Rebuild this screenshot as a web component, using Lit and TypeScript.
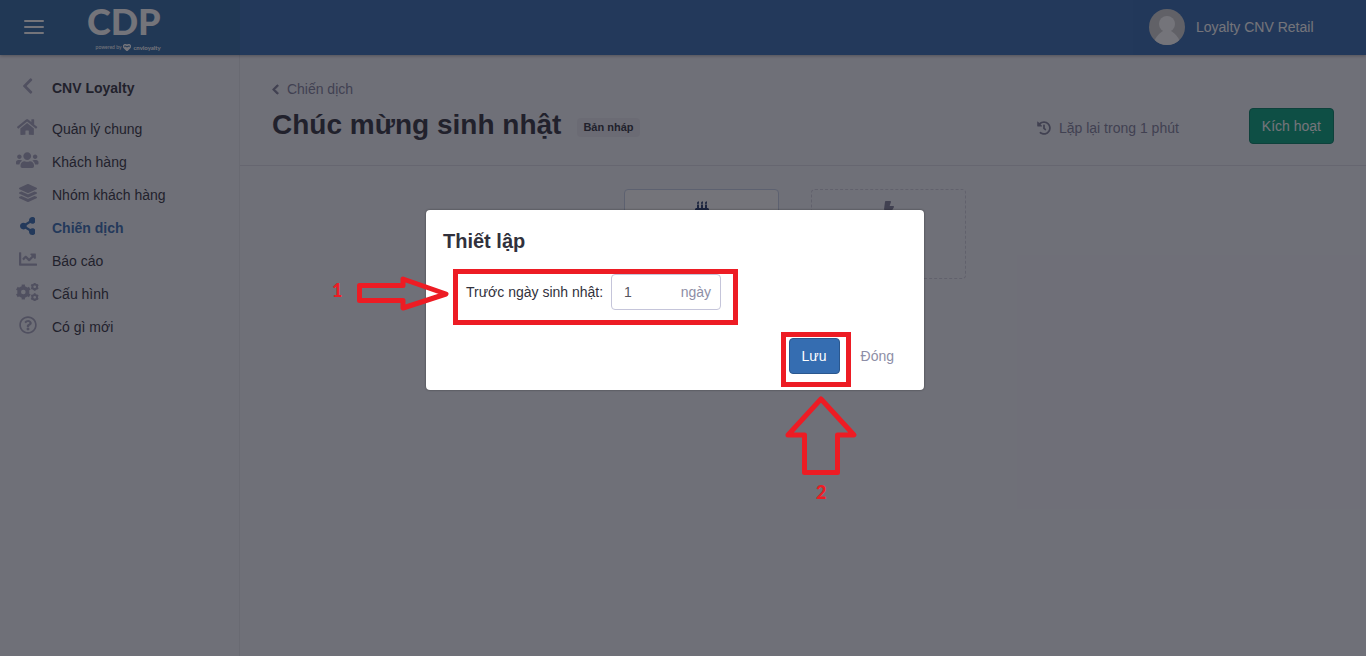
import { LitElement, html, svg, css } from "lit";
import { customElement, state } from "lit/decorators.js";

const chevron = svg`<path d="M34.5 239L228.9 44.7c9.4-9.4 24.6-9.4 33.9 0l22.7 22.7c9.4 9.4 9.4 24.5 0 33.9L131.5 256l154 154.8c9.3 9.4 9.3 24.5 0 33.9l-22.7 22.7c-9.4 9.4-24.6 9.4-33.9 0L34.5 273c-9.4-9.4-9.4-24.6 0-34z"/>`;

const gear = (x: number, y: number, r: number, hole: number) => svg`
  <g transform="translate(${x} ${y})" fill="none" stroke="currentColor">
    <circle r=${(r * 0.82 + hole) / 2} stroke-width=${r * 0.82 - hole}></circle>
    ${[0, 60, 120, 180, 240, 300].map(
      (a) => svg`<path transform="rotate(${a})" stroke-width=${r * 0.44} d="M0 ${-r * 0.62}V${-r}"/>`
    )}
  </g>`;

const icons = {
  home: { w: 576, d: svg`<path d="M280.37 148.26L96 300.11V464a16 16 0 0 0 16 16l112.06-.29a16 16 0 0 0 15.92-16V368a16 16 0 0 1 16-16h64a16 16 0 0 1 16 16v95.64a16 16 0 0 0 16 16.05L464 480a16 16 0 0 0 16-16V300L295.67 148.26a12.19 12.19 0 0 0-15.3 0zM571.6 251.47L488 182.56V44.05a12 12 0 0 0-12-12h-56a12 12 0 0 0-12 12v72.61L318.47 43a48 48 0 0 0-61 0L4.34 251.47a12 12 0 0 0-1.6 16.9l25.5 31A12 12 0 0 0 45.15 301l235.22-193.74a12.19 12.19 0 0 1 15.3 0L530.9 301a12 12 0 0 0 16.9-1.6l25.5-31a12 12 0 0 0-1.7-16.93z"/>` },
  users: { w: 640, d: svg`<path d="M96 224c35.3 0 64-28.7 64-64s-28.7-64-64-64-64 28.7-64 64 28.7 64 64 64zm448 0c35.3 0 64-28.7 64-64s-28.7-64-64-64-64 28.7-64 64 28.7 64 64 64zm32 32h-64c-17.6 0-33.5 7.1-45.1 18.6 40.3 22.1 68.9 62 75.1 109.4h66c17.7 0 32-14.3 32-32v-32c0-35.3-28.7-64-64-64zm-256 0c61.9 0 112-50.1 112-112S381.9 32 320 32 208 82.1 208 144s50.1 112 112 112zm76.8 32h-8.3c-20.8 10-43.9 16-68.5 16s-47.6-6-68.5-16h-8.3C179.6 288 128 339.6 128 403.2V432c0 26.5 21.5 48 48 48h288c26.5 0 48-21.5 48-48v-28.8c0-63.6-51.6-115.2-115.2-115.2zm-223.7-13.4C161.5 263.1 145.6 256 128 256H64c-35.3 0-64 28.7-64 64v32c0 17.7 14.3 32 32 32h65.9c6.3-47.4 34.9-87.3 75.2-109.4z"/>` },
  layers: { w: 512, d: svg`<path d="M12.41 148.02l232.94 105.67c6.8 3.09 14.49 3.09 21.29 0l232.94-105.67c16.55-7.51 16.55-32.52 0-40.03L266.65 2.31a25.607 25.607 0 0 0-21.29 0L12.41 107.98c-16.55 7.51-16.55 32.53 0 40.04zm487.18 88.28l-58.09-26.33-161.64 73.27c-7.56 3.43-15.59 5.17-23.86 5.17s-16.29-1.74-23.86-5.17L70.51 209.97l-58.1 26.33c-16.55 7.5-16.55 32.5 0 40l232.94 105.59c6.8 3.08 14.49 3.08 21.29 0L499.59 276.3c16.55-7.5 16.55-32.5 0-40zm0 127.8l-57.87-26.23-161.86 73.37c-7.56 3.43-15.59 5.17-23.86 5.17s-16.29-1.74-23.86-5.17L70.29 337.87 12.41 364.1c-16.55 7.5-16.55 32.5 0 40l232.94 105.59c6.8 3.08 14.49 3.08 21.29 0L499.59 404.1c16.55-7.5 16.55-32.5 0-40z"/>` },
  share: { w: 448, d: svg`<path d="M352 320c-22.608 0-43.387 7.819-59.79 20.895l-102.486-64.054a96.551 96.551 0 0 0 0-41.683l102.486-64.054C308.613 184.181 329.392 192 352 192c53.019 0 96-42.981 96-96S405.019 0 352 0s-96 42.981-96 96c0 7.158.79 14.13 2.276 20.841L155.79 180.895C139.387 167.819 118.608 160 96 160c-53.019 0-96 42.981-96 96s42.981 96 96 96c22.608 0 43.387-7.819 59.79-20.895l102.486 64.054A96.301 96.301 0 0 0 256 416c0 53.019 42.981 96 96 96s96-42.981 96-96-42.981-96-96-96z"/>` },
  chart: { w: 512, d: svg`<path d="M496 384H64V80c0-8.84-7.16-16-16-16H16C7.16 64 0 71.16 0 80v336c0 17.67 14.33 32 32 32h464c8.84 0 16-7.16 16-16v-32c0-8.84-7.16-16-16-16zM464 96H345.94c-21.38 0-32.09 25.85-16.97 40.97l32.4 32.4L288 242.75l-73.37-73.37c-12.5-12.5-32.76-12.5-45.25 0l-68.69 68.69c-6.25 6.25-6.25 16.38 0 22.63l22.62 22.62c6.25 6.25 16.38 6.25 22.63 0L192 237.25l73.37 73.37c12.5 12.5 32.76 12.5 45.25 0l96-96 32.4 32.4c15.12 15.12 40.97 4.41 40.97-16.97V112c.01-8.84-7.15-16-15.99-16z"/>` },
  cogs: { w: 640, d: svg`${gear(208, 256, 212, 66)}${gear(532, 106, 116, 38)}${gear(532, 406, 116, 38)}` },
  help: { w: 512, d: svg`<path d="M256 8C119.043 8 8 119.083 8 256c0 136.997 111.043 248 248 248s248-111.003 248-248C504 119.083 392.957 8 256 8zm0 448c-110.532 0-200-89.431-200-200 0-110.495 89.472-200 200-200 110.491 0 200 89.471 200 200 0 110.53-89.431 200-200 200zm107.244-255.2c0 67.052-72.421 68.084-72.421 92.863V300c0 6.627-5.373 12-12 12h-45.647c-6.627 0-12-5.373-12-12v-8.659c0-35.745 27.1-50.034 47.579-61.516 17.561-9.845 28.324-16.541 28.324-29.579 0-17.246-21.999-28.693-39.784-28.693-23.189 0-33.894 10.977-48.942 29.969-4.057 5.12-11.46 6.071-16.666 2.124l-27.824-21.098c-5.107-3.872-6.251-11.066-2.644-16.363C184.846 131.491 214.94 112 261.794 112c49.071 0 101.45 38.304 101.45 88.8zM298 368c0 23.159-18.841 42-42 42s-42-18.841-42-42 18.841-42 42-42 42 18.841 42 42z"/>` },
  history: { w: 512, d: svg`<path d="M504 255.531c.253 136.64-111.18 248.372-247.82 248.468-59.015.042-113.223-20.53-155.822-54.911-11.077-8.94-11.905-25.541-1.839-35.607l11.267-11.267c8.609-8.609 22.353-9.551 31.891-1.984C173.062 425.135 212.781 440 256 440c101.705 0 184-82.311 184-184 0-101.705-82.311-184-184-184-48.814 0-93.149 18.969-126.068 49.932l50.754 50.754c10.08 10.08 2.941 27.314-11.313 27.314H24c-8.837 0-16-7.163-16-16V38.627c0-14.254 17.234-21.393 27.314-11.314l49.372 49.372C129.209 34.136 189.552 8 256 8c136.81 0 247.747 110.78 248 247.531zm-180.912 78.784l9.823-12.63c8.138-10.463 6.253-25.542-4.21-33.679L288 256.349V152c0-13.255-10.745-24-24-24h-16c-13.255 0-24 10.745-24 24v135.651l65.409 50.874c10.463 8.137 25.541 6.253 33.679-4.21z"/>` },
  bolt: { w: 320, d: svg`<path d="M296 160H180.6l42.6-129.8C227.2 15 215.7 0 200 0H56C44 0 33.8 8.9 32.2 20.8l-32 240C-1.7 275.2 9.5 288 24 288h118.7L96.6 482.5c-3.6 15.2 8 29.5 23.3 29.5 8.4 0 16.4-4.4 20.8-12l176-304c9.3-15.9-2.2-36-20.7-36z"/>` },
  cake: { w: 448, d: svg`<path d="M96 96c-18 0-32-14-32-32C64 32 96 40 96 0c12 0 32 29 32 56s-14 40-32 40zm128 0c-18 0-32-14-32-32 0-32 32-24 32-64 12 0 32 29 32 56s-14 40-32 40zm128 0c-18 0-32-14-32-32 0-32 32-24 32-64 12 0 32 29 32 56s-14 40-32 40zM64 112h64v112h64V112h64v112h64V112h64v112h16c26 0 48 22 48 48v64c-40 0-40-32-75-32-36 0-39 32-75 32-35 0-37-32-74-32-36 0-38 32-74 32-37 0-38-32-75-32-35 0-35 32-75 32v-64c0-26 22-48 48-48h16zM0 368c40 0 40-32 75-32 36 0 38 32 75 32 36 0 38-32 74-32 37 0 38 32 74 32 36 0 39-32 75-32 35 0 35 32 75 32v144H0z"/>` },
  chevron: { w: 320, d: chevron },
};

type IconName = keyof typeof icons;

const icon = (name: IconName) =>
  html`<svg class="icon" viewBox="0 0 ${icons[name].w} 512" aria-hidden="true">${icons[name].d}</svg>`;

const menu: { icon: IconName; label: string; active?: boolean }[] = [
  { icon: "home", label: "Quản lý chung" },
  { icon: "users", label: "Khách hàng" },
  { icon: "layers", label: "Nhóm khách hàng" },
  { icon: "share", label: "Chiến dịch", active: true },
  { icon: "chart", label: "Báo cáo" },
  { icon: "cogs", label: "Cấu hình" },
  { icon: "help", label: "Có gì mới" },
];

@customElement("app-root")
export class AppRoot extends LitElement {
  @state() private days = "1";

  static styles = css`
    :host {
      display: block;
      font: 14px/20px "Liberation Sans", Arial, sans-serif;
      color: #31313c;
      background: #fff;
    }
    * { box-sizing: border-box; }
    a { color: inherit; text-decoration: none; }
    h1, h2, p { margin: 0; }
    button, input { font: inherit; }
    .icon { display: block; height: 1em; fill: currentColor; flex: none; }

    .app {
      position: relative;
      display: flex;
      flex-direction: column;
      min-height: calc(100vh - 6px);
      background: #f3f4fa;
    }

    .topbar {
      display: flex;
      align-items: stretch;
      height: 55px;
      background: #356db1;
      color: #fff;
      box-shadow: 0 1px 3px rgba(0, 0, 0, 0.3);
      z-index: 1;
    }
    .brand {
      display: flex;
      align-items: center;
      width: 240px;
      padding: 0 0 1px 24px;
      gap: 43px;
      background: #3069a4;
    }
    .burger {
      display: grid;
      gap: 4px;
      width: 20px;
      padding: 0;
      border: 0;
      background: none;
    }
    .burger i { height: 2px; border-radius: 1px; background: #fff; }
    .logo {
      display: grid;
      justify-items: end;
      margin-bottom: 2px;
      font-family: Lato, sans-serif;
    }
    .logo-name { font-size: 36px; line-height: 43px; font-weight: 900; }
    .logo-tag {
      display: flex;
      align-items: center;
      gap: 2px;
      font-size: 5px;
      line-height: 9px;
    }
    .logo-tag b { font-size: 6px; }
    .logo-tag svg { width: 8px; height: 7px; fill: none; stroke: currentColor; stroke-width: 3; }
    .account {
      display: flex;
      align-items: center;
      gap: 11px;
      width: 233px;
      margin-left: auto;
      padding: 0 0 1px 16px;
      background: #346aae;
    }
    .avatar { width: 36px; height: 36px; border-radius: 50%; }

    .body { display: flex; flex: 1; }
    .sidebar {
      flex: none;
      width: 240px;
      padding: 17px 0;
      border-right: 1px solid #e4e5ec;
    }
    .row {
      display: grid;
      grid-template-columns: 24px 1fr;
      align-items: center;
      column-gap: 12px;
      height: 32px;
      padding-left: 16px;
    }
    .row .icon { justify-self: center; margin: 0 1px 4px 0; font-size: 18px; color: #a6a6bd; }
    .section { margin-bottom: 9px; font-weight: 700; }
    .menu { display: grid; gap: 1px; }
    .row.active, .row.active .icon { color: #356db1; }
    .active { font-weight: 700; }

    .main { flex: 1; min-width: 0; }
    .head { padding: 24px 32px 21px; border-bottom: 1px solid #dcdde7; }
    .crumb {
      display: inline-flex;
      align-items: center;
      gap: 8px;
      margin-bottom: 5px;
      color: #80809a;
      vertical-align: top;
    }
    .crumb .icon { font-size: 11px; stroke: currentColor; stroke-width: 40; }
    .title-row { display: flex; align-items: flex-end; height: 40px; }
    .title { font-size: 28px; line-height: 38px; }
    .badge {
      margin: 0 auto 7px 16px;
      padding: 0 6px;
      border-radius: 4px;
      background: #e8e9f0;
      font-size: 11px;
      line-height: 19px;
      font-weight: 700;
    }
    .repeat {
      display: flex;
      align-items: center;
      gap: 8px;
      margin-right: 70px;
      line-height: 32px;
      color: #80809a;
    }
    .btn {
      height: 36px;
      padding: 0 12px;
      border: 1px solid transparent;
      border-radius: 4px;
      background: none;
      color: #8e8ea6;
    }
    .activate { background: #00a27a; border-color: #007f62; color: #fff; }
    .save { background: #356db1; border-color: #2a578e; color: #fff; }

    .flow { display: flex; justify-content: center; gap: 32px; padding: 23px 16px 0 0; }
    .node {
      display: flex;
      justify-content: center;
      width: 155px;
      height: 90px;
      padding-top: 11px;
      border: 1px solid #c5d0e6;
      border-radius: 4px;
      background: #fff;
      color: #233a6c;
      font-size: 16px;
    }
    .empty { border: 1px dashed #cfd0dc; background: none; color: #80809a; }

    .overlay {
      position: absolute;
      inset: 0;
      z-index: 2;
      display: flex;
      justify-content: center;
      align-items: flex-start;
      padding: 210px 16px 0 0;
      background: rgba(23, 23, 33, 0.6);
    }
    .modal {
      position: relative;
      width: 498px;
      padding: 17px 17px 16px;
      border-radius: 4px;
      background: #fff;
      box-shadow: 0 0 2px rgba(0, 0, 0, 0.5);
    }
    .modal-title { font-size: 20px; line-height: 28px; }
    .field {
      display: flex;
      align-items: center;
      gap: 8px;
      margin: 19px 0 28px;
      padding-left: 23px;
    }
    .control {
      display: flex;
      align-items: center;
      width: 110px;
      height: 36px;
      padding: 0 9px 0 12px;
      border: 1px solid #c5c5da;
      border-radius: 4px;
      color: #8e8ea6;
    }
    .control input {
      flex: 1;
      min-width: 0;
      padding: 0;
      border: 0;
      outline: 0;
      background: none;
      color: #55555f;
    }
    .actions { display: flex; justify-content: flex-end; gap: 8px; }

    .marks {
      position: absolute;
      left: -100px;
      top: 0;
      width: 598px;
      height: 300px;
      pointer-events: none;
      fill: none;
      stroke: #ed1c24;
      stroke-width: 5;
    }
    .marks text { font: 900 18px Lato, sans-serif; fill: #ed1c24; stroke: none; }
  `;

  render() {
    return html`
      <div class="app">
        <header class="topbar">
          <div class="brand">
            <button class="burger" aria-label="Menu"><i></i><i></i><i></i></button>
            <a class="logo" href="#">
              <span class="logo-name">CDP</span>
              <span class="logo-tag">
                powered by
                <svg viewBox="0 0 16 14"><path d="M8 13L2 7C-1 3 4-1 8 3c4-4 9 0 6 4zM4 6l4 3 4-3"/></svg>
                <b>cnvloyalty</b>
              </span>
            </a>
          </div>
          <div class="account">
            <svg class="avatar" viewBox="0 0 36 36" aria-hidden="true">
              <rect width="36" height="36" fill="#d0d0d0"></rect>
              <circle cx="18" cy="15" r="8" fill="#fff"></circle>
              <path d="M5 33c2-6 6-9 9-11h8c3 2 7 5 9 11v3H5z" fill="#fff"></path>
            </svg>
            <span>Loyalty CNV Retail</span>
          </div>
        </header>

        <div class="body">
          <nav class="sidebar">
            <a class="row section" href="#">${icon("chevron")}<span>CNV Loyalty</span></a>
            <div class="menu">
              ${menu.map(
                (m) => html`<a class="row ${m.active ? "active" : ""}" href="#">${icon(m.icon)}<span>${m.label}</span></a>`
              )}
            </div>
          </nav>

          <main class="main">
            <div class="head">
              <a class="crumb" href="#">${icon("chevron")}<span>Chiến dịch</span></a>
              <div class="title-row">
                <h1 class="title">Chúc mừng sinh nhật</h1>
                <span class="badge">Bản nháp</span>
                <span class="repeat">${icon("history")}Lặp lại trong 1 phút</span>
                <button class="btn activate">Kích hoạt</button>
              </div>
            </div>
            <div class="flow">
              <div class="node">${icon("cake")}</div>
              <div class="node empty">${icon("bolt")}</div>
            </div>
          </main>
        </div>

        <div class="overlay">
          <section class="modal" role="dialog" aria-labelledby="dialog-title">
            <h2 class="modal-title" id="dialog-title">Thiết lập</h2>
            <div class="field">
              <label for="days">Trước ngày sinh nhật:</label>
              <div class="control">
                <input
                  id="days"
                  inputmode="numeric"
                  .value=${this.days}
                  @input=${(e: Event) => (this.days = (e.target as HTMLInputElement).value)}
                />
                <span>ngày</span>
              </div>
            </div>
            <div class="actions">
              <button class="btn save">Lưu</button>
              <button class="btn">Đóng</button>
            </div>
            <svg class="marks" viewBox="326 210 598 300" aria-hidden="true">
              <rect x="455.5" y="271.5" width="280" height="51"></rect>
              <rect x="783.5" y="334.5" width="65" height="50"></rect>
              <path d="M359.500 285.500H403V279L446 294L403 308V300.500H359.500Z" stroke-linejoin="round"></path>
              <path d="M821 399L854 435H837.500V472.500H804.500V435H788Z" stroke-linejoin="round"></path>
              <text x="332" y="297">1</text>
              <text x="816" y="499">2</text>
            </svg>
          </section>
        </div>
      </div>
    `;
  }
}
